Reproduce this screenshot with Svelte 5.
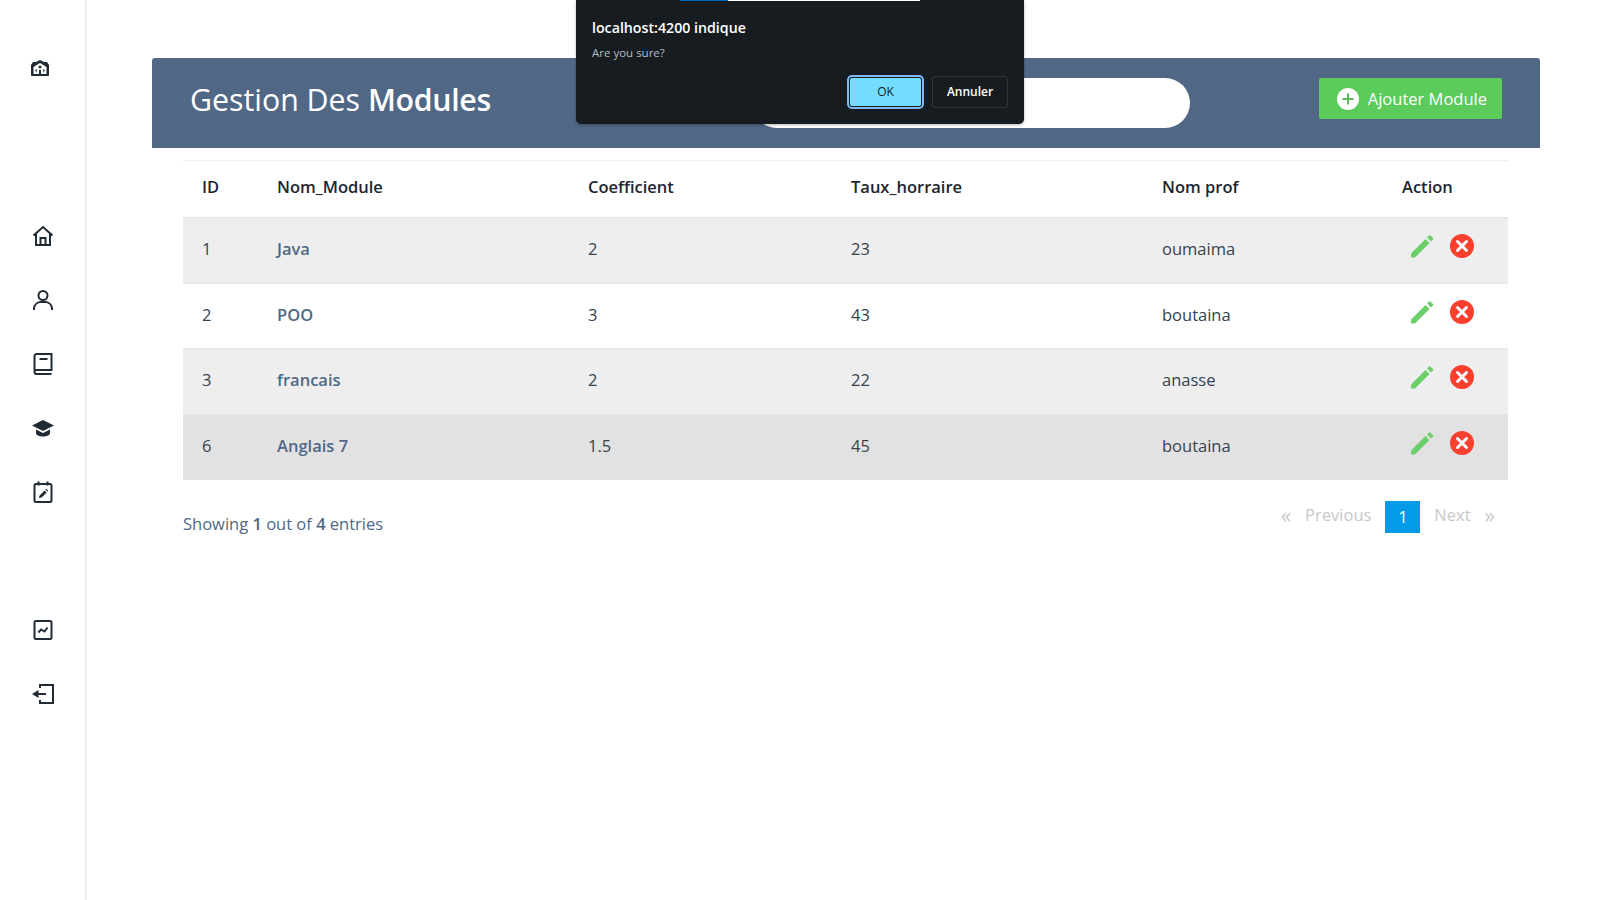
<script>
	const columns = [
		{ label: 'ID', width: 75 },
		{ label: 'Nom_Module', width: 311 },
		{ label: 'Coefficient', width: 263 },
		{ label: 'Taux_horraire', width: 311 },
		{ label: 'Nom prof', width: 240 },
		{ label: 'Action', width: 125 }
	]

	const modules = [
		{ id: 1, name: 'Java', coef: '2', taux: 23, prof: 'oumaima' },
		{ id: 2, name: 'POO', coef: '3', taux: 43, prof: 'boutaina' },
		{ id: 3, name: 'francais', coef: '2', taux: 22, prof: 'anasse' },
		{ id: 6, name: 'Anglais 7', coef: '1.5', taux: 45, prof: 'boutaina', hover: true }
	]
</script>

<div class="page">
	<aside class="sidebar">
		<svg class="logo" viewBox="0 0 18 16" width="18" height="16">
			<path fill="#212b36" d="M9 0l4 2h3l2 3v10a1 1 0 0 1-1 1H1a1 1 0 0 1-1-1V5l2-3h3z" />
			<path fill="#fff" d="M9 3l6.500 4v7H2.500V7z" />
			<circle cx="9" cy="7" r="1.500" fill="#212b36" />
			<path fill="#212b36" d="M8 10h2v4H8zM4.500 9.500h1.500v2H4.500zM12 9.500h1.500v2H12z" />
		</svg>

		<nav class="nav-top">
			<svg viewBox="0 0 24 24"><path d="M2.500 11.500L12 3l9.500 8.500M5 9.500V21h14V9.500M9.500 21v-7h5v7" /></svg>
			<svg viewBox="0 0 24 24"><circle cx="12" cy="7.500" r="4.500" /><path d="M3 22v-2a7 7 0 0 1 7-6h4a7 7 0 0 1 7 6v2" /></svg>
			<svg viewBox="0 0 24 24"><path d="M3.500 19V4a2 2 0 0 1 2-2h15v16h-15a2 2 0 0 0-2 2v0a2 2 0 0 0 2 2h15M8.500 7h8" /></svg>
			<svg viewBox="0 0 24 24">
				<path class="solid" d="M12 4L1 9.500 12 15l11-5.500z" />
				<path class="solid" d="M5 13.500l7 3.500 7-3.500V17c0 2-3 3.500-7 3.500S5 19 5 17z" />
			</svg>
			<svg viewBox="0 0 24 24">
				<rect x="3.500" y="4" width="17" height="18" rx="1.500" />
				<path d="M7.500 1.500v4M16.500 1.500v4" />
				<path class="solid" d="M8 18l.6-2.600 5-5 2 2-5 5zM14.400 9.600l.9-.9 2 2-.9.900z" />
			</svg>
		</nav>

		<nav class="nav-bottom">
			<svg viewBox="0 0 24 24"><rect x="3.500" y="3" width="17" height="18" rx="1.500" /><path d="M7.500 14.500l2.500-3 3.500 2 3-4" /></svg>
			<svg viewBox="0 0 24 24">
				<path d="M9 6V3h13v18H9v-3M15 12H7" />
				<path class="solid" d="M7.500 8L1 12l6.500 4z" />
			</svg>
		</nav>
	</aside>

	<main class="content">
		<header class="banner">
			<h2>Gestion Des <b>Modules</b></h2>
			<input class="search" type="text" />
			<button class="add">
				<svg viewBox="0 0 22 22" width="22" height="22">
					<circle cx="11" cy="11" r="11" fill="#fff" />
					<path d="M11 5.500v11M5.500 11h11" stroke="#5cb85c" stroke-width="2" />
				</svg>
				Ajouter Module
			</button>
		</header>

		<section class="table-wrap">
			<table>
				<colgroup>
					{#each columns as col}
						<col style="width: {col.width}px" />
					{/each}
				</colgroup>
				<thead>
					<tr>
						{#each columns as col}
							<th>{col.label}</th>
						{/each}
					</tr>
				</thead>
				<tbody>
					{#each modules as m, i}
						<tr class:odd={i % 2 === 0} class:hover={m.hover}>
							<td>{m.id}</td>
							<td class="name">{m.name}</td>
							<td>{m.coef}</td>
							<td>{m.taux}</td>
							<td>{m.prof}</td>
							<td>
								<div class="actions">
									<svg viewBox="0 0 24 24" width="24" height="24">
										<path fill="#6ccf6a" d="M1 19.500L15.500 5l4 4L5 23.500H1z" />
										<path fill="#6ccf6a" d="M17 3.500L19 1.500a1 1 0 0 1 1.400 0l2.600 2.600a1 1 0 0 1 0 1.400l-2 2z" />
									</svg>
									<svg viewBox="0 0 24 24" width="24" height="24">
										<circle cx="12" cy="12" r="12" fill="#f9402f" />
										<path d="M7.500 7.500l9 9M16.500 7.500l-9 9" stroke="#fff" stroke-width="3" stroke-linecap="round" />
									</svg>
								</div>
							</td>
						</tr>
					{/each}
				</tbody>
			</table>

			<footer class="table-foot">
				<p>Showing <b>1</b> out of <b>4</b> entries</p>
				<ul class="pager">
					<li class="arrow">«</li>
					<li class="word">Previous</li>
					<li class="current">1</li>
					<li class="word">Next</li>
					<li class="arrow">»</li>
				</ul>
			</footer>
		</section>
	</main>

	<div class="alert">
		<h4>localhost:4200 indique</h4>
		<p>Are you sure?</p>
		<div class="alert-buttons">
			<button class="ok">OK</button>
			<button class="cancel">Annuler</button>
		</div>
	</div>

	<div class="progress"><span></span></div>
</div>

<style>
	:global(body) {
		margin: 0;
		background: #fff;
	}
	.page {
		position: relative;
		display: flex;
		height: 900px;
		overflow: hidden;
		font-family: "Open Sans", "Liberation Sans", sans-serif;
		color: #36424f;
	}
	.sidebar {
		box-sizing: border-box;
		flex: 0 0 87px;
		border-right: 2px solid #eeeeee;
		display: flex;
		flex-direction: column;
		align-items: center;
		padding-top: 60px;
	}
	.sidebar svg:not(.logo) {
		width: 24px;
		height: 24px;
		fill: none;
		stroke: #212b36;
		stroke-width: 2;
	}
	.sidebar .solid {
		fill: #212b36;
		stroke: none;
	}
	.logo {
		margin-left: -6px;
	}
	.nav-top,
	.nav-bottom {
		display: flex;
		flex-direction: column;
		gap: 40px;
	}
	.nav-top {
		margin-top: 148px;
	}
	.nav-bottom {
		margin-top: 114px;
	}
	.content {
		flex: 1;
		padding: 58px 60px 0 65px;
	}
	.banner {
		box-sizing: border-box;
		height: 90px;
		background: #506886;
		border-radius: 3px 3px 0 0;
		display: flex;
		align-items: flex-start;
		padding: 20px 38px 0;
		color: #fff;
	}
	.banner h2 {
		margin: 0;
		width: 562px;
		font-size: 30.300px;
		font-weight: 400;
		line-height: 44px;
		white-space: nowrap;
	}
	.banner h2 b {
		font-weight: 600;
		letter-spacing: -0.3px;
	}
	.search {
		box-sizing: border-box;
		width: 438px;
		height: 50px;
		border: none;
		border-radius: 25px;
		background: #fff;
	}
	.add {
		margin-left: auto;
		display: flex;
		align-items: center;
		gap: 9px;
		height: 41px;
		padding: 0 15px 0 18px;
		border: none;
		border-radius: 2px;
		background: #5bcb5b;
		color: #fff;
		font-family: inherit;
		font-size: 16.500px;
	}
	.table-wrap {
		margin: 12px 31px 0;
	}
	table {
		width: 1325px;
		table-layout: fixed;
		border-collapse: collapse;
		border-top: 1px solid #eeeeee;
		font-size: 16.500px;
	}
	th {
		box-sizing: border-box;
		height: 57px;
		padding: 0 0 5px 19px;
		text-align: left;
		font-weight: 600;
		color: #1c2530;
		border-bottom: 1px solid #e4e4e4;
	}
	td {
		box-sizing: border-box;
		height: 65.500px;
		padding: 0 0 3px 19px;
		border-bottom: 1px solid #e6e6e6;
	}
	tr.odd td {
		background: #eeeeee;
	}
	tr.hover td {
		background: #e2e2e2;
	}
	td.name {
		color: #506886;
		font-weight: 600;
	}
	.actions {
		display: flex;
		gap: 16px;
		margin-top: -5px;
		margin-left: 8px;
	}
	.table-foot {
		display: flex;
		justify-content: space-between;
		align-items: flex-start;
		padding-top: 21px;
		font-size: 16.500px;
	}
	.table-foot p {
		margin: 11px 0 0;
		color: #506886;
	}
	.table-foot b {
		font-weight: 600;
	}
	.pager {
		display: flex;
		align-items: center;
		gap: 14px;
		margin: 0;
		padding: 0 14px 0 0;
		list-style: none;
		color: #c8c8c8;
	}
	.pager .word {
		margin-top: -5px;
	}
	.pager .arrow {
		margin-top: -5px;
		font-size: 21px;
	}
	.pager .current {
		width: 35px;
		line-height: 32px;
		text-align: center;
		background: #039be5;
		color: #fff;
		font-weight: 500;
	}
	.progress {
		position: absolute;
		left: 680px;
		top: 0;
		width: 240px;
		height: 1px;
		background: #fff;
	}
	.progress span {
		display: block;
		width: 48px;
		height: 1px;
		background: #0067c0;
	}
	.alert {
		position: absolute;
		left: 576px;
		top: 0;
		box-sizing: border-box;
		width: 448px;
		height: 124px;
		padding: 18px 16px 0;
		background: #171c20;
		border-radius: 0 0 5px 5px;
		box-shadow: 0 1px 3px rgba(0, 0, 0, 0.3);
		color: #fff;
	}
	.alert h4 {
		margin: 0;
		font-size: 14.200px;
		line-height: 20px;
		font-weight: 600;
	}
	.alert p {
		margin: 7px 0 0;
		font-size: 11.500px;
		line-height: 16px;
		color: #b5bcc2;
	}
	.alert-buttons {
		display: flex;
		justify-content: flex-end;
		align-items: center;
		gap: 10px;
		margin-top: 15px;
	}
	.alert button {
		box-sizing: border-box;
		height: 32px;
		padding: 0 0 2px;
		font-family: inherit;
		font-size: 12px;
		border-radius: 3px;
	}
	.alert .ok {
		width: 73px;
		height: 30px;
		background: #74dcff;
		color: #171c20;
		border: 1px solid #171c20;
		outline: 2px solid #7fb8f5;
	}
	.alert .cancel {
		width: 76px;
		background: #171c20;
		color: #fff;
		font-weight: 600;
		border: 1px solid #30363c;
	}
</style>
